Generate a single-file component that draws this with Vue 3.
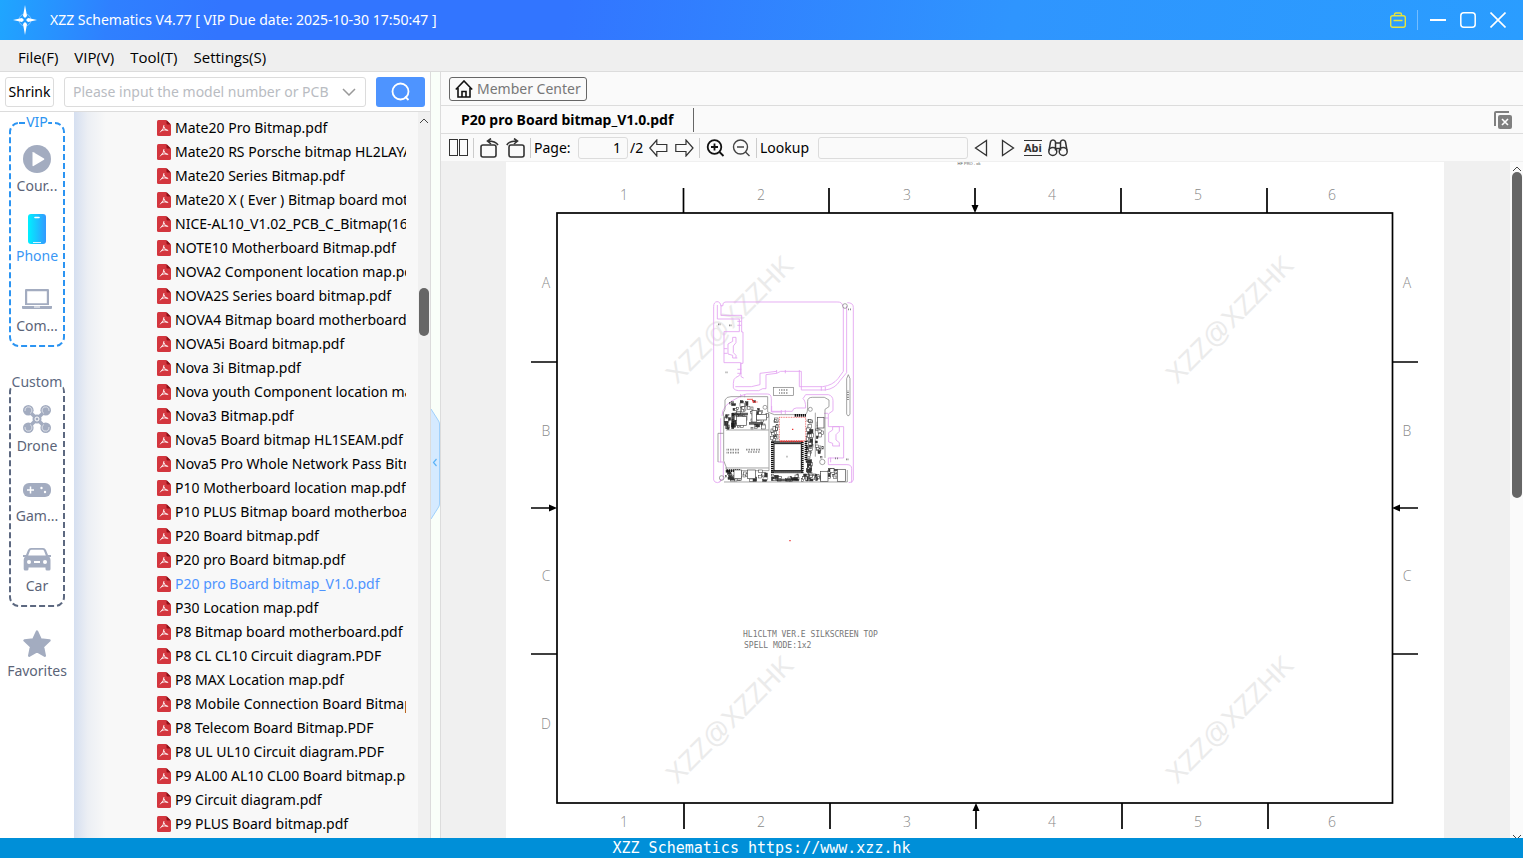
<script setup>
import { ref } from 'vue'

const menus = ['File(F)', 'VIP(V)', 'Tool(T)', 'Settings(S)']

const files = [
  'Mate20 Pro Bitmap.pdf',
  'Mate20 RS Porsche bitmap HL2LAYA.pdf',
  'Mate20 Series Bitmap.pdf',
  'Mate20 X ( Ever ) Bitmap board motherboard.pdf',
  'NICE-AL10_V1.02_PCB_C_Bitmap(16).pdf',
  'NOTE10 Motherboard Bitmap.pdf',
  'NOVA2 Component location map.pdf',
  'NOVA2S Series board bitmap.pdf',
  'NOVA4 Bitmap board motherboard.pdf',
  'NOVA5i Board bitmap.pdf',
  'Nova 3i Bitmap.pdf',
  'Nova youth Component location map.pdf',
  'Nova3 Bitmap.pdf',
  'Nova5 Board bitmap HL1SEAM.pdf',
  'Nova5 Pro Whole Network Pass Bitmap.pdf',
  'P10 Motherboard location map.pdf',
  'P10 PLUS Bitmap board motherboard.pdf',
  'P20 Board bitmap.pdf',
  'P20 pro Board bitmap.pdf',
  'P20 pro Board bitmap_V1.0.pdf',
  'P30 Location map.pdf',
  'P8 Bitmap board motherboard.pdf',
  'P8 CL CL10 Circuit diagram.PDF',
  'P8 MAX Location map.pdf',
  'P8 Mobile Connection Board Bitmap.pdf',
  'P8 Telecom Board Bitmap.PDF',
  'P8 UL UL10 Circuit diagram.PDF',
  'P9 AL00 AL10 CL00 Board bitmap.pdf',
  'P9 Circuit diagram.pdf',
  'P9 PLUS Board bitmap.pdf',
]
const current = ref('P20 pro Board bitmap_V1.0.pdf')
const page = ref('1')
const lookup = ref('')

const columns = [
  { n: 1, x: 624 },
  { n: 2, x: 761 },
  { n: 3, x: 907 },
  { n: 4, x: 1052 },
  { n: 5, x: 1198 },
  { n: 6, x: 1332 },
]
const zones = [
  { n: 'A', y: 288 },
  { n: 'B', y: 436 },
  { n: 'C', y: 581 },
  { n: 'D', y: 729 },
]
const marks = [
  [677, 385],
  [1177, 385],
  [677, 785],
  [1177, 785],
]

// Small components are scattered over these board areas: x, y, width, height, count
const areas = [
  [72, 540, 130, 34, 34],
  [212, 552, 160, 22, 44],
  [318, 380, 22, 190, 50],
  [344, 388, 32, 120, 16],
  [360, 535, 74, 40, 18],
  [78, 325, 110, 50, 22],
  [94, 368, 50, 48, 26],
  [150, 362, 56, 56, 18],
  [212, 378, 24, 76, 18],
  [72, 370, 20, 50, 12],
]
let seed = 11
const rnd = () => {
  seed = (seed * 16807) % 2147483647
  return seed / 2147483647
}
const parts = areas.flatMap(([x, y, w, h, n]) =>
  Array.from({ length: n }, () => {
    const pw = 4 + Math.round(rnd() * 9)
    const ph = 4 + Math.round(rnd() * 9)
    return {
      x: x + Math.round(rnd() * (w - pw)),
      y: y + Math.round(rnd() * (h - ph)),
      w: pw,
      h: ph,
      solid: rnd() > 0.72,
    }
  })
)
</script>

<template>
  <div class="app">
    <header class="titlebar">
      <svg class="logo" viewBox="0 0 26 30" aria-hidden="true">
        <circle cx="13" cy="15" r="6" fill="none" stroke="#9fd0ff" stroke-width="1" opacity=".7" />
        <path d="M13 0l2 11-2 2-2-2zM13 30l2-11-2-2-2 2zM1 15l9-2 2 2-2 2zM25 15l-9-2-2 2 2 2z" fill="#fff" />
      </svg>
      <h1>XZZ Schematics V4.77 [ VIP Due date: 2025-10-30 17:50:47 ]</h1>
      <div class="window-tools">
        <button class="bag" aria-label="Toolbox">
          <svg width="16" height="16" viewBox="0 0 16 16" fill="none" stroke="#e6e43c" stroke-width="1.4">
            <rect x=".7" y="3.7" width="14.6" height="11.6" rx="2" />
            <path d="M4.500 3.500V2.500q0-1.500 1.500-1.500h4q1.500 0 1.500 1.500v1M3.500 8.500h9" />
          </svg>
        </button>
        <span class="rule"></span>
        <button aria-label="Minimize">
          <svg width="16" height="16" viewBox="0 0 16 16"><path d="M0 8h16" stroke="#fff" stroke-width="2" /></svg>
        </button>
        <button aria-label="Maximize">
          <svg width="16" height="16" viewBox="0 0 16 16"><rect x=".8" y=".8" width="14.400" height="14.400" rx="3" fill="none" stroke="#fff" stroke-width="1.500" /></svg>
        </button>
        <button aria-label="Close">
          <svg width="16" height="16" viewBox="0 0 16 16"><path d="M.5.5l15 15M15.500.5l-15 15" stroke="#fff" stroke-width="1.600" /></svg>
        </button>
      </div>
    </header>

    <nav class="menubar">
      <button v-for="m in menus" :key="m">{{ m }}</button>
    </nav>

    <main class="workspace">
      <section class="left">
        <form class="search" @submit.prevent>
          <button type="button" class="shrink">Shrink</button>
          <div class="combo">
            <input type="text" aria-label="Model number or PCB" placeholder="Please input the model number or PCB" />
            <svg width="14" height="8" viewBox="0 0 14 8" fill="none" stroke="#999" stroke-width="1.500"><path d="M1 1l6 6 6-6" /></svg>
          </div>
          <button class="go" aria-label="Search">
            <svg width="20" height="20" viewBox="0 0 20 20" fill="none" stroke="#fff" stroke-width="1.800"><circle cx="9.500" cy="9.500" r="8" /><path d="M14 14.500l3.500 3.500" /></svg>
          </button>
        </form>

        <div class="browser">
          <aside class="categories">
            <section class="group vip">
              <svg class="frame" aria-hidden="true"><rect x="1" y="1" rx="9" /></svg>
              <h2>VIP</h2>
              <button class="cat">
                <span class="pic"><svg width="28" height="28" viewBox="0 0 28 28"><circle cx="14" cy="14" r="14" fill="#a3acc0" /><path d="M9.500 7.500v13q0 1 1 .6l10.500-6.300q.8-.6 0-1.200L10.500 7.200q-1-.5-1 .3z" fill="#fff" /></svg></span>
                <span>Cour...</span>
              </button>
              <button class="cat on">
                <span class="pic">
                  <svg width="18" height="30" viewBox="0 0 18 30">
                    <defs><linearGradient id="glow"><stop offset="0" stop-color="#00f0ff" /><stop offset="1" stop-color="#3399ff" /></linearGradient></defs>
                    <rect width="18" height="30" rx="3" fill="url(#glow)" />
                    <path d="M7 3.500h4" stroke="#fff" stroke-width="1.600" stroke-linecap="round" /><path d="M5 28.500h8" stroke="#d8f4ff" />
                  </svg>
                </span>
                <span>Phone</span>
              </button>
              <button class="cat">
                <span class="pic"><svg width="30" height="22" viewBox="0 0 30 22" fill="#a3acc0"><path d="M4 1h22q1 0 1 1v15H3V2q0-1 1-1zm1.200 2.200v12h19.600v-12z" fill-rule="evenodd" /><path d="M0 18h30v2q0 1-1 1H1q-1 0-1-1z" /><path d="M12 19h6" stroke="#fff" /></svg></span>
                <span>Com...</span>
              </button>
            </section>

            <section class="group custom">
              <svg class="frame" aria-hidden="true"><rect x="1" y="1" rx="9" /></svg>
              <h2>Custom</h2>
              <button class="cat">
                <span class="pic">
                  <svg width="28" height="28" viewBox="0 0 28 28">
                    <path d="M5 5l18 18M23 5L5 23" fill="none" stroke="#a3acc0" stroke-width="3.600" />
                    <circle cx="14" cy="14" r="4.500" fill="#a3acc0" />
                    <circle cx="14" cy="14" r="2" fill="none" stroke="#fff" />
                    <g fill="#a3acc0"><circle cx="5.300" cy="5.300" r="5.300" /><circle cx="22.700" cy="5.300" r="5.300" /><circle cx="5.300" cy="22.700" r="5.300" /><circle cx="22.700" cy="22.700" r="5.300" /></g>
                    <g fill="none" stroke="#fff" stroke-width=".6"><path d="M2 6a3.500 3.500 0 1 1 5 2.500M26 6a3.500 3.500 0 1 0-5 2.500M2 22a3.500 3.500 0 1 0 5-2.500M26 22a3.500 3.500 0 1 1-5-2.500" /></g>
                  </svg>
                </span>
                <span>Drone</span>
              </button>
              <button class="cat">
                <span class="pic low"><svg width="28" height="14" viewBox="0 0 28 14"><rect width="28" height="14" rx="6" fill="#a3acc0" /><path d="M7.500 3.500v7M4 7h7" stroke="#fff" stroke-width="1.500" /><circle cx="18.500" cy="5" r="1.200" fill="#fff" /><circle cx="22" cy="9" r="1.200" fill="#fff" /></svg></span>
                <span>Gam...</span>
              </button>
              <button class="cat">
                <span class="pic"><svg width="28" height="24" viewBox="0 0 28 24"><path d="M8 1h12q2 0 3 2l2 5h3v2h-1.500q1 1.500 1 3v9q0 1.500-1.500 1.500h-2q-1.500 0-1.500-1.500v-1.500H5.500V22q0 1.500-1.500 1.500H2.200Q.7 23.500.7 22v-9q0-1.500 1-3H0V8h3l2-5q1-2 3-2zm.5 1.800q-1 0-1.500 1L5.200 8.500h17.600L21 3.800q-.5-1-1.500-1z" fill="#a3acc0" fill-rule="evenodd" /><circle cx="6" cy="15" r="2" fill="#fff" /><circle cx="22" cy="15" r="2" fill="#fff" /><rect x="11" y="14" width="6" height="2" fill="#fff" /></svg></span>
                <span>Car</span>
              </button>
            </section>

            <button class="cat favorites">
              <span class="pic"><svg width="28" height="28" viewBox="0 0 28 28"><path d="M14 1.500l3.700 8 8.800 1-6.500 6.200 1.800 9L14 21.300l-7.800 4.400 1.800-9L1.500 10.500l8.800-1z" fill="#a3acc0" stroke="#a3acc0" stroke-width="2.400" stroke-linejoin="round" /></svg></span>
              <span>Favorites</span>
            </button>
          </aside>

          <ul class="files">
            <li v-for="f in files" :key="f">
              <a href="#" :class="{ on: f === current }" @click.prevent="current = f">
                <svg width="14" height="16" viewBox="0 0 14 16">
                  <path d="M1.500 0H9l5 5v9.500q0 1.500-1.500 1.500h-11Q0 16 0 14.500v-13Q0 0 1.500 0z" fill="#d3363e" />
                  <path d="M9.500 0L14 4.500h-3.500q-1 0-1-1z" fill="#8f1019" />
                  <path d="M7 5.500q.2 3-3.500 6.500M7 7q.5 3.300 3.800 3.500M5 10.300q2-.8 5-.2" fill="none" stroke="#fff" stroke-width=".9" stroke-linecap="round" />
                </svg>
                <span>{{ f }}</span>
              </a>
            </li>
          </ul>

          <div class="scroll list-scroll">
            <svg width="10" height="6" viewBox="0 0 10 6" fill="none" stroke="#444"><path d="M1 5l4-4 4 4" /></svg>
            <span class="thumb"></span>
          </div>
        </div>
      </section>

      <div class="splitter">
        <button aria-label="Collapse panel">
          <svg width="9" height="110" viewBox="0 0 9 110"><path d="M0 0l7 11q1.500 2 1.500 4v80q0 2-1.500 4l-7 11" fill="#d5eaff" stroke="#9fd0fb" /><path d="M5.500 50l-3 3.500 3 3.500" fill="none" stroke="#5cb3f8" stroke-width="1.200" /></svg>
        </button>
      </div>

      <section class="right">
        <div class="member">
          <button>
            <svg width="18" height="18" viewBox="0 0 18 18" fill="none" stroke="#111" stroke-width="1.600"><path d="M.8 9.500L9 1l8.200 8.500M3 8v9h12V8M7 17v-5.500h4V17" /></svg>
            Member Center
          </button>
        </div>
        <div class="tabs">
          <button class="tab">{{ current }}</button>
          <button class="close-all" aria-label="Close all tabs">
            <svg width="18" height="18" viewBox="0 0 18 18"><path d="M1 15V2q0-1 1-1h13" fill="none" stroke="#808080" stroke-width="2" /><rect x="4" y="4" width="14" height="14" rx="2" fill="#808080" /><path d="M8 8l6 6M14 8l-6 6" stroke="#fff" stroke-width="1.600" /></svg>
          </button>
        </div>
        <div class="toolbar">
          <button class="tool tight" aria-label="Two pages"><svg width="20" height="18" viewBox="0 0 20 18" fill="none" stroke="#333"><rect x=".5" y=".5" width="8" height="16" /><rect x="10.500" y=".5" width="8" height="16" /></svg></button>
          <span class="sep"></span>
          <button class="tool" aria-label="Rotate left"><svg width="20" height="20" viewBox="0 0 20 20" fill="none" stroke="#333" stroke-width="1.600"><rect x="1" y="7" width="15" height="12" rx="2" /><path d="M18 7Q15.500 3 8 3M11 .5L7.500 3l3.500 3" /></svg></button>
          <button class="tool tight" aria-label="Rotate right"><svg width="20" height="20" viewBox="0 0 20 20" fill="none" stroke="#333" stroke-width="1.600"><rect x="3" y="7" width="15" height="12" rx="2" /><path d="M.8 7Q3 3 11 3M8 .5L11.500 3 8 6" /></svg></button>
          <span class="sep before-label"></span>
          <label class="page-label" for="page">Page:</label>
          <input id="page" v-model="page" class="page" type="text" />
          <span class="total">/2</span>
          <button class="tool" aria-label="Previous page"><svg width="20" height="18" viewBox="0 0 20 18" fill="none" stroke="#333" stroke-width="1.200"><path d="M.8 9l7-8v4.500h10v7h-10V17z" /></svg></button>
          <button class="tool tight" aria-label="Next page"><svg width="20" height="18" viewBox="0 0 20 18" fill="none" stroke="#333" stroke-width="1.200"><path d="M18 9l-7-8v4.500H.8v7H11V17z" /></svg></button>
          <span class="sep"></span>
          <button class="tool" aria-label="Zoom in"><svg width="20" height="18" viewBox="0 0 20 18" fill="none" stroke="#111" stroke-width="1.800"><circle cx="8.500" cy="8" r="6.800" /><path d="M13.500 13l4 4M8.500 4.500v7M5 8h7" /></svg></button>
          <button class="tool tight" aria-label="Zoom out"><svg width="20" height="18" viewBox="0 0 20 18" fill="none" stroke="#444" stroke-width="1.400"><circle cx="8.500" cy="8" r="7" /><path d="M13.500 13l4 4M5 8h7" /></svg></button>
          <span class="sep before-label"></span>
          <label class="lookup-label" for="lookup">Lookup</label>
          <input id="lookup" v-model="lookup" class="lookup" type="text" />
          <button class="tool" aria-label="Find previous"><svg width="14" height="18" viewBox="0 0 14 18" fill="none" stroke="#333" stroke-width="1.300"><path d="M12.500 1.500v15L1.500 9z" /></svg></button>
          <button class="tool next" aria-label="Find next"><svg width="14" height="18" viewBox="0 0 14 18" fill="none" stroke="#333" stroke-width="1.300"><path d="M1.500 1.500v15L12.500 9z" /></svg></button>
          <button class="tool abi">Abi</button>
          <button class="tool" aria-label="Find all"><svg width="20" height="18" viewBox="0 0 20 18" fill="none" stroke="#333" stroke-width="1.500"><circle cx="4.800" cy="12.500" r="4" /><circle cx="15.200" cy="12.500" r="4" /><path d="M1 11.500L2.500 3q.4-2 2.500-2t2.500 2v8.500M19 11.500L17.500 3q-.4-2-2.500-2t-2.500 2v8.500M7.500 4h5M7.500 9.500h5" /></svg></button>
        </div>

        <div class="viewer">
          <svg class="sheet" viewBox="506 162 938 676" preserveAspectRatio="xMidYMin meet">
            <text x="969" y="165" class="tiny" text-anchor="middle">HF PRO - ok</text>

            <g class="mark"><text v-for="m in marks" :key="m.join()" :transform="`translate(${m[0]} ${m[1]}) rotate(-45)`">XZZ@XZZHK</text></g>

            <g fill="none" stroke="#000" stroke-width="1.700">
              <rect x="557" y="213" width="835.500" height="590" />
              <path d="M683.500 188v25M829 188v25M975 188v22M1121 188v25M1267 188v25M684 803v26M830 803v26M976 807v22M1122 803v26M1268 803v26" />
              <path d="M531 362h26M531 508h22M531 654h26M1392 362h26M1396 508h22M1392 654h26" />
            </g>
            <path d="M971.500 205h7l-3.500 8zM972.500 811h7l-3.500-8zM549 504.500v7l8-3.500zM1400 504.500v7l-8-3.500z" />

            <g class="zone" text-anchor="middle">
              <g v-for="c in columns" :key="c.n"><text :x="c.x" y="200">{{ c.n }}</text><text :x="c.x" y="827">{{ c.n }}</text></g>
              <text v-for="z in zones" :key="z.n" x="546" :y="z.y">{{ z.n }}</text>
              <text v-for="z in zones.slice(0, 3)" :key="z.n" x="1407" :y="z.y">{{ z.n }}</text>
            </g>

            <g transform="translate(700 290) scale(.3333)">
              <g fill="none" stroke="#e2a0f0" stroke-width="2.500">
                <path d="M41 570V50q0-14 10-15 10 0 12 13l6-1q-2-12 12-11h330q16-1 17 12M442 38q18 0 18 14v518q-2 8-14 8M41 570q2 8 12 8 10 0 10-12" />
                <path d="M52 45v42h66v38H72v93h50v32q-4 10-14 12-8 4-8 18v14q4 8 16 8h60l12-6h10v-42l32-4 12-6h62v56h72q30-4 44-28l20-24V48M63 46v30h62v50h4v94h-6v36q-2 6 8 8M106 290h48l26-6v-34l50-6 M298 240v50h70q30-4 46-24l16-22V50" />
                <path d="M108 142h-10v12l-14 8v30l14 4v8h14M108 142v16l-8 10v20l8 8v8M72 176h10M72 190h10M230 240v10M256 240v10M364 290v12M376 290v12M112 94h12M112 106h12M112 238h12M112 250h12" />
                <path d="M66 378q0-34 46-54 14-10 28-12h62q12 0 12 14v40h30M122 312v10M134 312v10M244 360v12M256 360v12M62 385v132M54 516h16v50l-12 10M215 348v16h62q2-10 12-10h28q0-22-8-28l8-12h68q14 4 14 18v30l-14 10v38h46v94h-46v20h56q14 0 14 12v42" />
                <path d="M418 410h-20v10l-12 8v28l12 4v8h22M418 410v14l-10 10v16l10 8v10M372 370h12M372 384h12M392 503v14" />
              </g>
              <g fill="none" stroke="#777" stroke-width="2">
                <path d="M75 330q4-10 18-10h110v46l20 8h94q6-6 6-20V334q0-12 14-12h36l14 8v20l-12 8v146M75 330v28q-8 10-4 22v132l8 20v10h128V372M54 430v86M54 430h16M78 420h128M76 534h130M72 576h370V540M346 368v132" />
                <rect x="220" y="292" width="60" height="24" /><path d="M440 266l5-12 5 12v106l-3 5h-4l-3-5z" />
                <circle cx="435" cy="48" r="7" /><circle cx="65" cy="564" r="7" /><circle cx="367" cy="516" r="8" /><circle cx="196" cy="566" r="7" />
                <circle cx="195" cy="352" r="6" /><circle cx="331" cy="358" r="6" /><circle cx="80" cy="395" r="6" />
              </g>
              <g>
                <rect v-for="(p, i) in parts" :key="i" :x="p.x" :y="p.y" :width="p.w" :height="p.h" :fill="p.solid ? '#333' : '#fff'" stroke="#333" stroke-width="1.500" />
              </g>
              <g fill="none" stroke="#111" stroke-width="8" stroke-dasharray="4 2">
                <path d="M97 372h46M98 370v46M214 456h96M217 456v92M307 456v92M214 546h96M148 400h40M232 570h66M318 452v60M80 542h40M284 376h34" />
              </g>
              <g fill="#fff" stroke="#444" stroke-width="2">
                <rect x="110" y="380" width="30" height="26" /><rect x="156" y="362" width="14" height="34" /><rect x="170" y="374" width="30" height="16" />
                <rect x="222" y="461" width="82" height="81" stroke="#111" stroke-width="3" />
                <rect x="238" y="382" width="79" height="70" stroke="#e33" stroke-dasharray="3 2" />
                <rect x="102" y="540" width="22" height="26" /><rect x="142" y="540" width="24" height="26" /><rect x="362" y="544" width="22" height="30" /><rect x="412" y="538" width="24" height="36" /><rect x="352" y="382" width="20" height="32" />
              </g>
              <g fill="none" stroke="#555" stroke-width="5" stroke-dasharray="2 3"><path d="M80 479h40M80 488h40M138 479h42M144 486h36M238 300h26M238 309h26M54 103h8M87 106h8M77 247h6M445 58h8M406 505h8M438 508h8M260 500h3M444 302v30" /></g>
              <path d="M240 454h70M276 418h6M142 328h16v8h14M268 752h4" fill="none" stroke="#e33" stroke-width="4" stroke-dasharray="4 2" />
            </g>

            <g class="note">
              <text x="743" y="637">HL1CLTM VER.E SILKSCREEN TOP</text>
              <text x="744" y="648">SPELL MODE:1x2</text>
            </g>
          </svg>
          <div class="scroll page-scroll">
            <svg width="10" height="6" viewBox="0 0 10 6" fill="none" stroke="#444"><path d="M1 5l4-4 4 4" /></svg>
            <span class="thumb"></span>
            <svg class="down" width="10" height="4" viewBox="0 0 10 4" fill="none" stroke="#444"><path d="M1 1l4 4 4-4" /></svg>
          </div>
        </div>
      </section>
    </main>

    <footer>XZZ Schematics https://www.xzz.hk</footer>
  </div>
</template>

<style>
body {
  margin: 0;
}
</style>

<style scoped>
.app {
  display: flex;
  flex-direction: column;
  height: 100vh;
  overflow: hidden;
  font: 14px/20px "Noto Sans", "Open Sans", sans-serif;
  color: #000;
}
* {
  box-sizing: border-box;
}
button,
input {
  font: inherit;
  color: inherit;
  margin: 0;
  padding: 0;
}
button {
  border: 0;
  background: none;
  white-space: nowrap;
}
svg {
  display: block;
  flex: none;
}

.titlebar {
  flex: none;
  display: flex;
  align-items: center;
  height: 40px;
  padding: 0 17px 0 12px;
  background: linear-gradient(100deg, #1fa6ff 0, #2f80ff 110px, #3275ff 220px, #3275ff 560px, #2f95fe 1000px, #2a9dff 100%);
  color: #fff;
}
.logo {
  width: 26px;
  height: 30px;
}
h1 {
  margin: 0 auto 0 12px;
  font: inherit;
}
.window-tools {
  display: flex;
  align-items: center;
  gap: 14px;
}
.window-tools .rule {
  width: 1px;
  height: 20px;
  margin: 0 -2px 0 -3px;
  background: #74bdff;
}

.menubar {
  flex: none;
  display: flex;
  gap: 16px;
  height: 32px;
  padding: 2px 18px 0;
  border-bottom: 1px solid #dcdcdc;
  background: #efefef;
  font: 15px/20px "Open Sans", "Noto Sans", sans-serif;
}

.workspace {
  flex: 1;
  min-height: 0;
  display: flex;
}
.left {
  flex: none;
  display: flex;
  flex-direction: column;
  width: 431px;
  border-right: 1px solid #dcdcdc;
}
.search {
  flex: none;
  display: flex;
  align-items: center;
  height: 40px;
  padding: 0 5px;
  border-bottom: 1px solid #dcdcdc;
}
.shrink {
  width: 49px;
  height: 30px;
  border: 1px solid #dcdcdc;
  border-radius: 3px;
}
.combo {
  flex: 1;
  display: flex;
  align-items: center;
  height: 30px;
  margin: 0 10px;
  padding: 0 9px 0 8px;
  border: 1px solid #dcdcdc;
  border-radius: 3px;
}
.combo input {
  flex: 1;
  min-width: 0;
  border: 0;
  outline: 0;
}
.combo input::placeholder {
  color: #b9bcc2;
}
.go {
  display: grid;
  place-items: center;
  width: 49px;
  height: 30px;
  border-radius: 3px;
  background: #4e94ff;
}

.browser {
  flex: 1;
  min-height: 0;
  display: flex;
}
.categories {
  flex: none;
  width: 74px;
  padding: 10px 9px 0;
}
.group {
  position: relative;
  height: 225px;
  padding-top: 20px;
}
.custom {
  margin-top: 35px;
}
.frame {
  position: absolute;
  inset: 0;
  width: 100%;
  height: 100%;
}
.frame rect {
  width: calc(100% - 2px);
  height: calc(100% - 2px);
  fill: none;
  stroke: #2b94f2;
  stroke-width: 2px;
  stroke-dasharray: 6 3;
}
.custom .frame rect {
  stroke: #5c6880;
}
h2 {
  position: absolute;
  top: -10px;
  left: 50%;
  margin: 0;
  background: #fff;
  font: inherit;
  color: #5c6880;
  transform: translateX(-50%);
}
.vip h2 {
  color: #2b94f2;
}
.cat {
  display: flex;
  flex-direction: column;
  align-items: center;
  width: 100%;
  margin-bottom: 16px;
  color: #5b6478;
}
.cat.on {
  color: #3a97f5;
}
.pic {
  display: grid;
  place-items: center;
  height: 34px;
}
.pic.low {
  padding-top: 2px;
}
.favorites {
  margin-top: 20px;
}

.files {
  flex: 1;
  min-width: 0;
  margin: 0;
  padding: 4px 12px 0 83px;
  overflow: hidden;
  list-style: none;
  background: linear-gradient(90deg, #d5dff0, #eceff4 14px, #f8f8f8 32px);
}
.files a {
  display: flex;
  align-items: center;
  gap: 4px;
  height: 24px;
  overflow: hidden;
  color: inherit;
  text-decoration: none;
  white-space: nowrap;
}
.files a.on {
  color: #4e94ff;
}

.scroll {
  flex: none;
  display: flex;
  flex-direction: column;
  align-items: center;
}
.thumb {
  width: 10px;
  border-radius: 5px;
  background: #666;
}
.list-scroll {
  width: 12px;
  padding-top: 6px;
  background: #f0f0f0;
}
.list-scroll .thumb {
  height: 48px;
  margin-top: 164px;
}

.splitter {
  flex: none;
  width: 10px;
  padding-top: 337px;
  border-right: 1px solid #dcdcdc;
  background: #f9fff9;
}

.right {
  flex: 1;
  min-width: 0;
  display: flex;
  flex-direction: column;
  background: #fafafa;
}
.member {
  flex: none;
  height: 34px;
  padding: 5px 8px;
  border-bottom: 1px solid #dcdcdc;
}
.member button {
  display: flex;
  align-items: center;
  gap: 4px;
  height: 24px;
  padding: 0 5px;
  border: 1px solid #666;
  border-radius: 3px;
  color: #777;
}
.tabs {
  flex: none;
  display: flex;
  align-items: center;
  justify-content: space-between;
  height: 28px;
  padding: 0 11px 0 20px;
  border-bottom: 1px solid #dcdcdc;
}
.tab {
  height: 24px;
  padding-right: 20px;
  border-right: 1px solid #666;
  font-weight: 700;
}
.toolbar {
  flex: none;
  display: flex;
  align-items: center;
  height: 27px;
  padding-left: 8px;
}
.tool {
  margin-right: 6px;
}
.tool.tight {
  margin-right: 4px;
}
.sep {
  width: 1px;
  height: 20px;
  margin-right: 6px;
  background: #ccc;
}
.sep.before-label {
  margin-right: 3px;
}
.page-label {
  width: 44px;
}
.page,
.lookup {
  height: 22px;
  padding: 0 6px;
  border: 1px solid #dcdcdc;
  border-radius: 3px;
  background: #fafafa;
}
.page {
  width: 50px;
  text-align: right;
}
.total {
  width: 17px;
  margin: 0 2px;
}
.lookup-label {
  width: 58px;
}
.lookup {
  width: 150px;
  margin-right: 6px;
}
.tool.next {
  margin: 0 9px 0 7px;
}
.abi {
  height: 16px;
  border-top: 1px solid #333;
  border-bottom: 1px solid #333;
  font-size: 11px;
  font-weight: 700;
  line-height: 12px;
  color: #333;
}

.viewer {
  flex: 1;
  min-height: 0;
  display: flex;
  gap: 66px;
  padding: 1px 0 0 65px;
  background: #f0f0f0;
}
.sheet {
  flex: 1;
  min-width: 0;
  height: 100%;
  background: #fff;
}
.page-scroll {
  width: 13px;
  padding-top: 4px;
  background: #fafafa;
}
.page-scroll .thumb {
  height: 326px;
}
.down {
  margin-top: auto;
}

.mark {
  font: 27px "Liberation Sans", sans-serif;
  fill: #ebebeb;
}
.zone {
  font: 300 14px "Open Sans", sans-serif;
  fill: #8a8a8a;
}
.note {
  font: 8px "DejaVu Sans Mono", monospace;
  fill: #777;
}
.tiny {
  font: 4px "Liberation Sans", sans-serif;
  fill: #555;
}

footer {
  flex: none;
  height: 20px;
  background: #008fd8;
  color: #fff;
  font: 15px/20px "DejaVu Sans Mono", monospace;
  text-align: center;
}
</style>
